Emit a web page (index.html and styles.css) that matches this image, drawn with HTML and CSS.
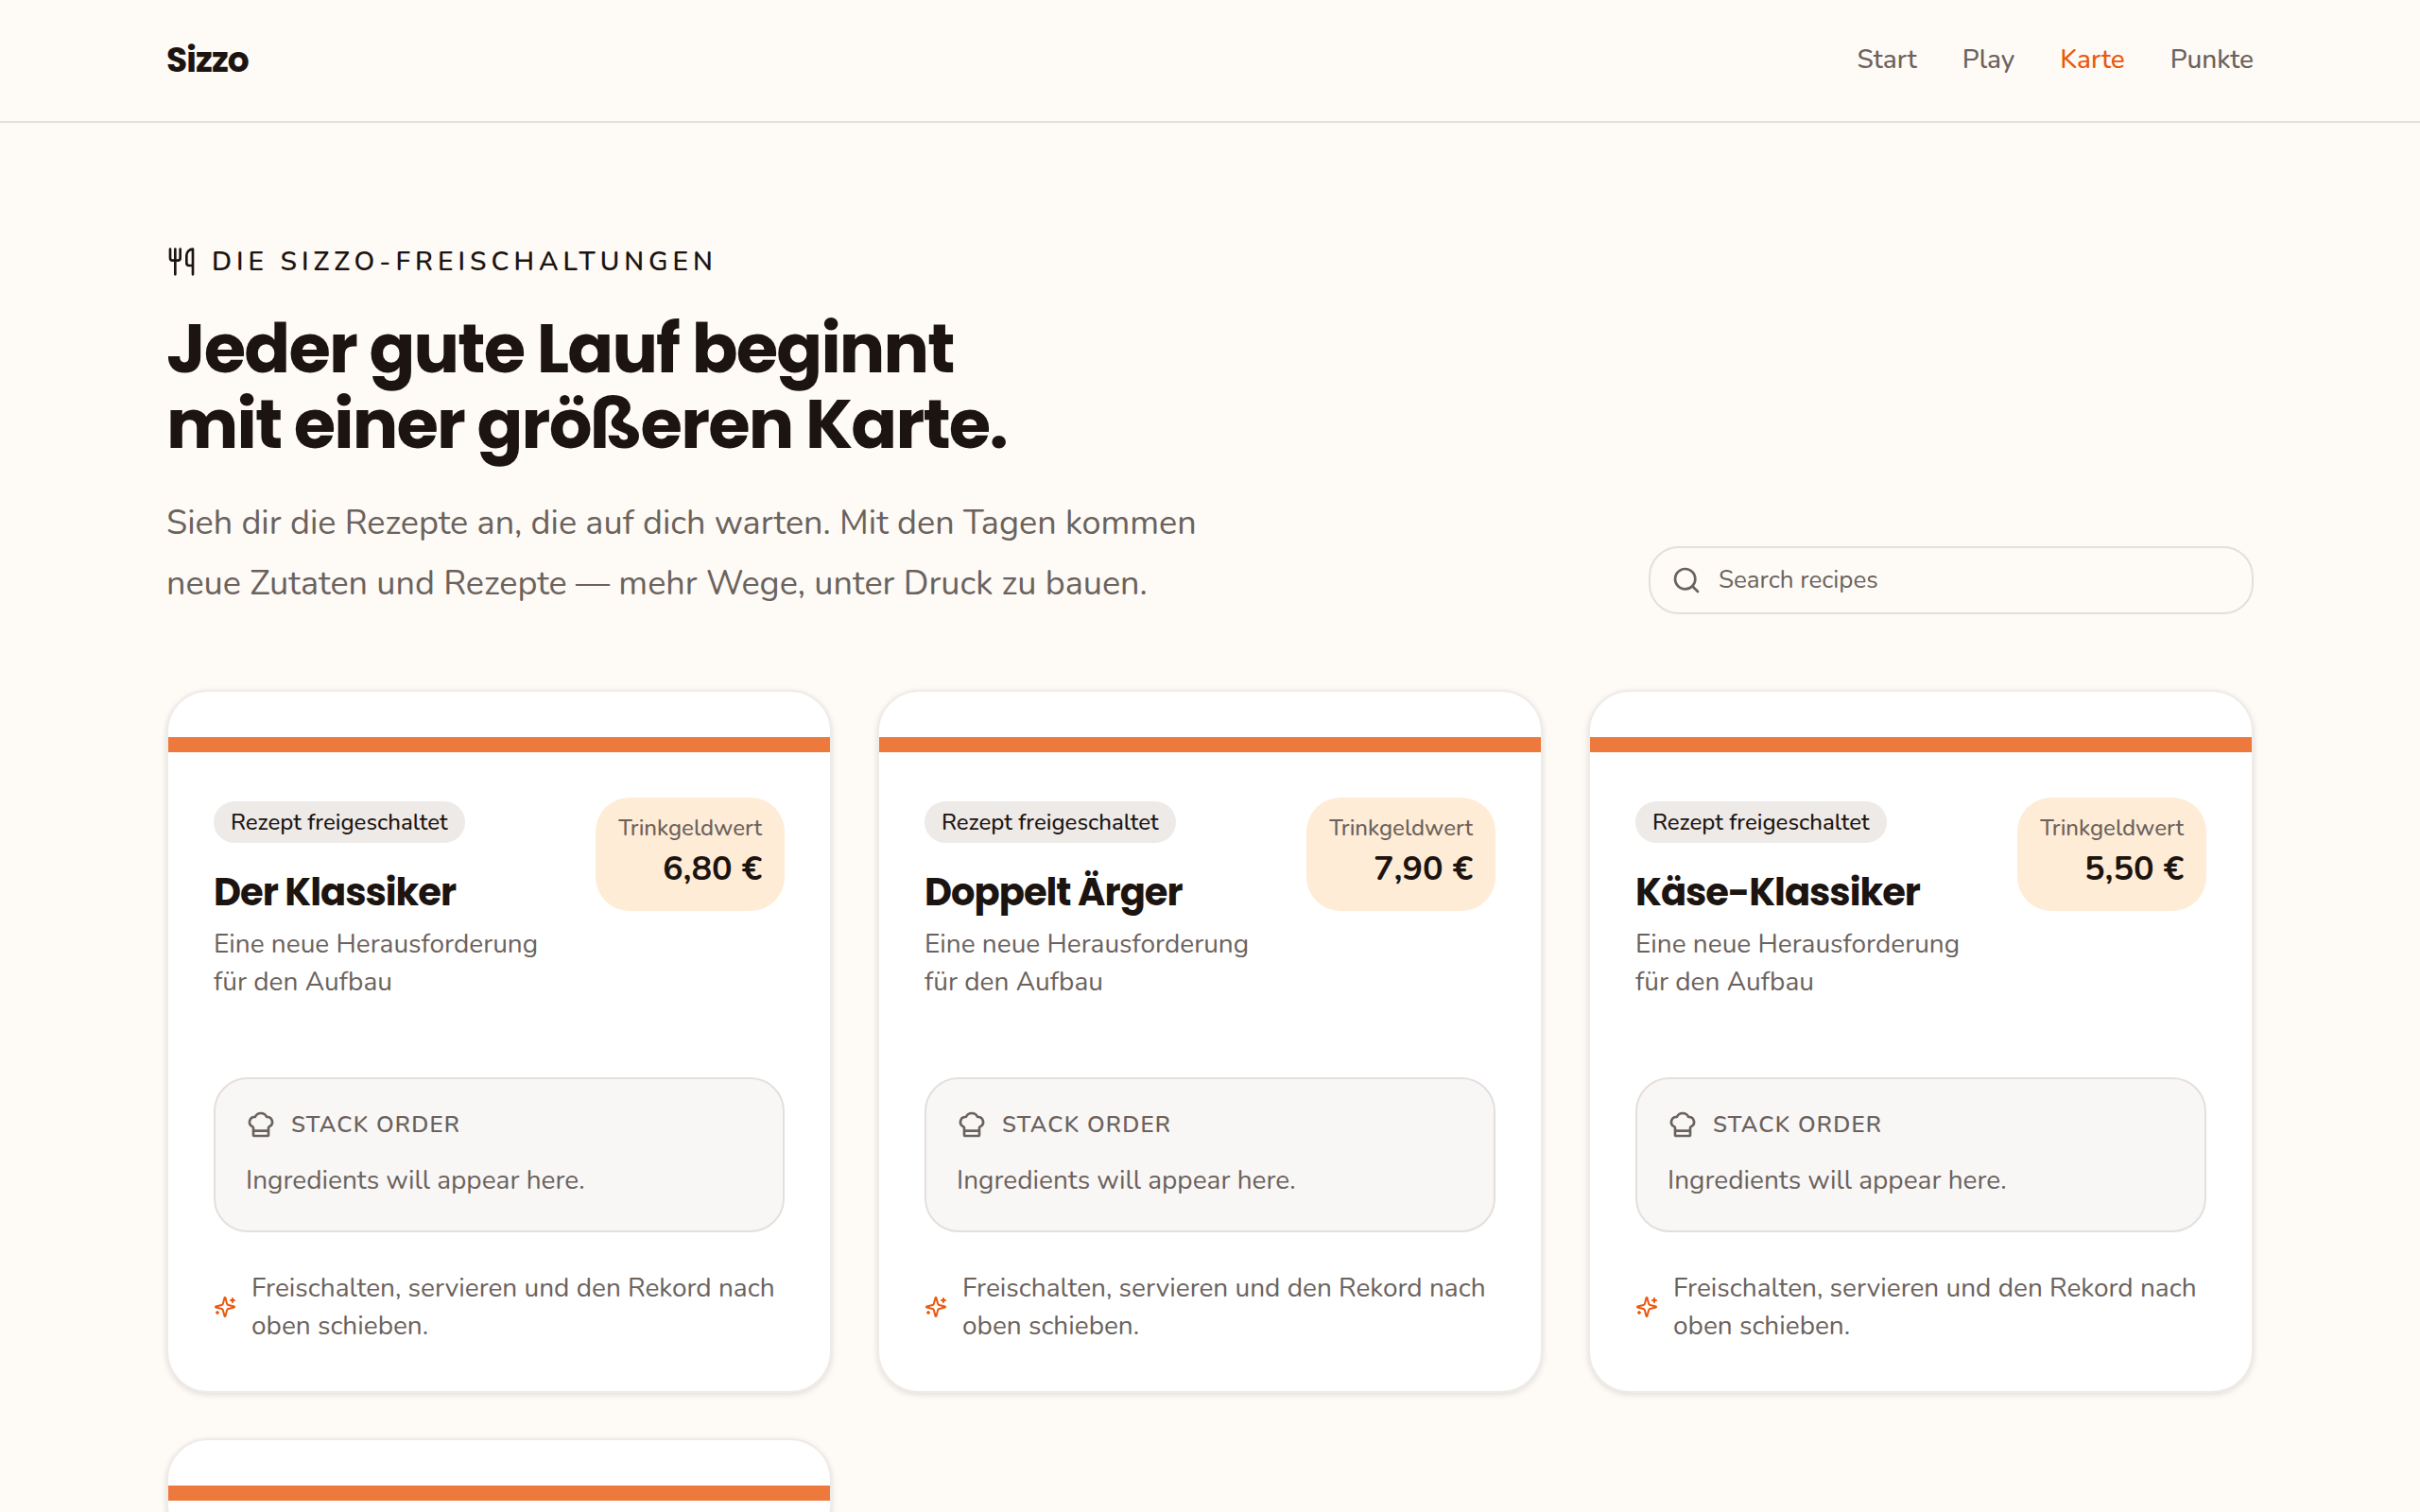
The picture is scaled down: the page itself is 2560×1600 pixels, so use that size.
FILE: index.html
```html
<!DOCTYPE html>
<html lang="de">
<head>
<meta charset="utf-8">
<title>Sizzo</title>
<link rel="stylesheet" href="styles.css">
</head>
<body>
<svg class="sprite" aria-hidden="true">
  <symbol id="utensils" viewBox="0 0 24 24"><path d="M3 2v7c0 1.1.9 2 2 2h4a2 2 0 0 0 2-2V2M7 2v20M21 15V2a5 5 0 0 0-5 5v6c0 1.1.9 2 2 2h3Zm0 0v7"/></symbol>
  <symbol id="search" viewBox="0 0 24 24"><circle cx="11" cy="11" r="8"/><path d="m21 21-4.34-4.34"/></symbol>
  <symbol id="chef" viewBox="0 0 24 24"><path d="M17 21a1 1 0 0 0 1-1v-5.35c0-.457.316-.844.727-1.041a4 4 0 0 0-2.134-7.589 5 5 0 0 0-9.186 0 4 4 0 0 0-2.134 7.588c.411.198.727.585.727 1.041V20a1 1 0 0 0 1 1ZM6 17h12"/></symbol>
  <symbol id="sparkles" viewBox="0 0 24 24"><path d="M9.937 15.5A2 2 0 0 0 8.5 14.063l-6.135-1.582a.5.5 0 0 1 0-.962L8.5 9.936A2 2 0 0 0 9.937 8.5l1.582-6.135a.5.5 0 0 1 .963 0L14.063 8.5A2 2 0 0 0 15.5 9.937l6.135 1.581a.5.5 0 0 1 0 .964L15.5 14.063a2 2 0 0 0-1.437 1.437l-1.582 6.135a.5.5 0 0 1-.963 0zM20 3v4M22 5h-4M4 17v2M5 18H3"/></symbol>
</svg>

<header class="site-header">
  <div class="container site-bar">
    <a class="logo" href="#">Sizzo</a>
    <nav class="nav">
      <a href="#">Start</a>
      <a href="#">Play</a>
      <a class="active" href="#" aria-current="page">Karte</a>
      <a href="#">Punkte</a>
    </nav>
  </div>
</header>

<main class="container main">
  <section class="hero">
    <div class="intro">
      <p class="eyebrow"><svg class="icon" aria-hidden="true"><use href="#utensils"/></svg>DIE SIZZO-FREISCHALTUNGEN</p>
      <h1>Jeder gute Lauf beginnt<br>mit einer größeren Karte.</h1>
      <p class="lead">Sieh dir die Rezepte an, die auf dich warten. Mit den Tagen kommen neue Zutaten und Rezepte — mehr Wege, unter Druck zu bauen.</p>
    </div>
    <label class="search">
      <svg class="icon" aria-hidden="true"><use href="#search"/></svg>
      <input type="search" placeholder="Search recipes" aria-label="Search recipes">
    </label>
  </section>

  <section class="cards">
    <article class="card">
      <div class="stripe"></div>
      <div class="head">
        <div class="info">
          <span class="pill">Rezept freigeschaltet</span>
          <h2>Der Klassiker</h2>
          <p>Eine neue Herausforderung für den Aufbau</p>
        </div>
        <div class="tip"><span class="tip-label">Trinkgeldwert</span><strong>6,80 €</strong></div>
      </div>
      <div class="stack">
        <h3><svg class="icon" aria-hidden="true"><use href="#chef"/></svg>STACK ORDER</h3>
        <p>Ingredients will appear here.</p>
      </div>
      <p class="note"><svg class="icon icon-small" aria-hidden="true"><use href="#sparkles"/></svg><span>Freischalten, servieren und den Rekord nach oben schieben.</span></p>
    </article>

    <article class="card">
      <div class="stripe"></div>
      <div class="head">
        <div class="info">
          <span class="pill">Rezept freigeschaltet</span>
          <h2>Doppelt Ärger</h2>
          <p>Eine neue Herausforderung für den Aufbau</p>
        </div>
        <div class="tip"><span class="tip-label">Trinkgeldwert</span><strong>7,90 €</strong></div>
      </div>
      <div class="stack">
        <h3><svg class="icon" aria-hidden="true"><use href="#chef"/></svg>STACK ORDER</h3>
        <p>Ingredients will appear here.</p>
      </div>
      <p class="note"><svg class="icon icon-small" aria-hidden="true"><use href="#sparkles"/></svg><span>Freischalten, servieren und den Rekord nach oben schieben.</span></p>
    </article>

    <article class="card">
      <div class="stripe"></div>
      <div class="head">
        <div class="info">
          <span class="pill">Rezept freigeschaltet</span>
          <h2>Käse-Klassiker</h2>
          <p>Eine neue Herausforderung für den Aufbau</p>
        </div>
        <div class="tip"><span class="tip-label">Trinkgeldwert</span><strong>5,50 €</strong></div>
      </div>
      <div class="stack">
        <h3><svg class="icon" aria-hidden="true"><use href="#chef"/></svg>STACK ORDER</h3>
        <p>Ingredients will appear here.</p>
      </div>
      <p class="note"><svg class="icon icon-small" aria-hidden="true"><use href="#sparkles"/></svg><span>Freischalten, servieren und den Rekord nach oben schieben.</span></p>
    </article>

    <article class="card">
      <div class="stripe"></div>
    </article>
  </section>
</main>
</body>
</html>
```
FILE: styles.css
```css
:root {
  --bg: #fefaf5;
  --ink: #1c1410;
  --muted: #6b625d;
  --line: #e4dfdc;
  --accent: #ea580c;
}

* { box-sizing: border-box; }

html { scrollbar-width: none; }

body {
  margin: 0;
  background: var(--bg);
  color: var(--ink);
  font-family: Nunito, Lato, sans-serif;
  font-size: 28px;
  line-height: 40px;
}

h1, h2, h3, p { margin: 0; }

h1, h2, .logo { letter-spacing: -0.025em; }

a { color: inherit; text-decoration: none; }

.sprite { display: none; }

.icon {
  flex: none;
  width: 32px;
  height: 32px;
  fill: none;
  stroke: currentColor;
  stroke-width: 2;
  stroke-linecap: round;
  stroke-linejoin: round;
}

.icon-small {
  width: 24px;
  height: 24px;
  color: var(--accent);
}

.container {
  max-width: 2304px;
  margin: 0 auto;
  padding: 0 48px;
}

/* Header */
.site-header { border-bottom: 2px solid var(--line); }

.site-bar {
  display: flex;
  align-items: center;
  justify-content: space-between;
  min-height: 128px;
}

.logo { font: 700 36px/40px Poppins, Inter, sans-serif; }

.nav {
  display: flex;
  gap: 48px;
  padding-bottom: 2px;
  color: var(--muted);
  font-weight: 500;
}

.nav .active { color: var(--accent); }

/* Hero */
.main { padding-top: 127px; padding-bottom: 96px; }

.hero {
  display: flex;
  align-items: flex-end;
  justify-content: space-between;
  gap: 48px;
  margin-bottom: 80px;
}

.intro { max-width: 1152px; }

.eyebrow {
  display: flex;
  align-items: center;
  gap: 16px;
  font-weight: 600;
  letter-spacing: 0.18em;
}

h1 {
  margin: 32px 0 33px;
  font: 700 72px/80px Poppins, Inter, sans-serif;
}

.lead {
  color: var(--muted);
  font-size: 36px;
  line-height: 64px;
}

.search {
  display: flex;
  align-items: center;
  gap: 18px;
  width: 640px;
  height: 72px;
  padding: 0 22px;
  border: 2px solid var(--line);
  border-radius: 32px;
  color: var(--muted);
}

.search input {
  flex: 1;
  min-width: 0;
  padding: 0;
  border: 0;
  outline: 0;
  background: none;
  color: inherit;
  font: inherit;
  font-size: 26px;
}

.search input::placeholder { color: inherit; opacity: 1; }

/* Recipe cards */
.cards {
  display: grid;
  grid-template-columns: repeat(3, 1fr);
  gap: 48px;
}

.card {
  padding: 48px 0;
  border: 2px solid #efebe8;
  border-radius: 44px;
  background: #fff;
  background-clip: padding-box;
  box-shadow: 0 2px 6px rgba(28, 20, 16, 0.12);
}

.stripe { height: 16px; background: #ee793d; }

.head {
  display: flex;
  align-items: flex-start;
  justify-content: space-between;
  gap: 32px;
  margin: 48px 48px 0;
}

.info { padding-top: 4px; color: var(--muted); }

.pill {
  display: block;
  width: fit-content;
  padding: 0 18px;
  border-radius: 22px;
  background: #edeae7;
  color: var(--ink);
  font-size: 24px;
  font-weight: 500;
  line-height: 44px;
}

h2 {
  margin: 28px 0 11px;
  color: var(--ink);
  font: 700 40px/48px Poppins, Inter, sans-serif;
}

.tip {
  display: flex;
  flex: none;
  flex-direction: column;
  gap: 8px;
  padding: 16px 24px 24px;
  border-radius: 36px;
  background: #ffecd6;
  text-align: right;
}

.tip-label {
  color: var(--muted);
  font-size: 24px;
  font-weight: 500;
  line-height: 32px;
}

.tip strong { font-size: 36px; font-weight: 700; }

.stack {
  margin: 81px 48px 39px;
  padding: 32px 32px 33px;
  border: 2px solid var(--line);
  border-radius: 36px;
  background: #f9f7f6;
  color: var(--muted);
}

.stack h3 {
  display: flex;
  align-items: center;
  gap: 16px;
  margin-bottom: 23px;
  font-size: 24px;
  font-weight: 600;
  line-height: 32px;
  letter-spacing: 0.05em;
}

.note {
  display: flex;
  align-items: center;
  gap: 16px;
  margin: 0 48px 1px;
  color: var(--muted);
}
```
